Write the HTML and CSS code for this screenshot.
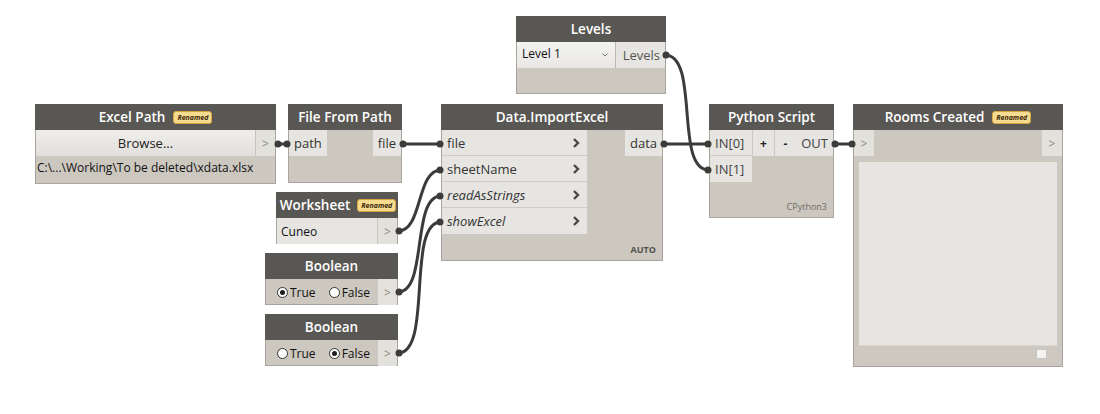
FILE: index.html
```html
<!DOCTYPE html>
<html lang="en">
<head>
    <meta charset="UTF-8">
    <title>Rooms from Excel</title>
    <link rel="stylesheet" href="styles.css">
</head>
<body>
    <div class="canvas">

        <!-- Levels selector -->
        <div class="node n-levels">
            <div class="hdr">Levels</div>
            <div class="row">
                <div class="dropdown"><span>Level 1</span><svg class="caret" width="6" height="4"><path d="M0.5 0.5 L3 3 L5.5 0.5"/></svg></div>
                <div class="port out">Levels</div>
            </div>
        </div>

        <!-- Excel Path -->
        <div class="node n-excel">
            <div class="hdr">Excel Path <span class="badge">Renamed</span></div>
            <div class="row">
                <div class="browse">Browse...</div>
                <div class="port arrow">&gt;</div>
            </div>
            <div class="path-text">C:\...\Working\To be deleted\xdata.xlsx</div>
        </div>

        <!-- File From Path -->
        <div class="node n-ffp">
            <div class="hdr">File From Path</div>
            <div class="cols">
                <div class="ins"><div class="port">path</div></div>
                <div class="fill"></div>
                <div class="outs"><div class="port out">file</div></div>
            </div>
        </div>

        <!-- Data.ImportExcel -->
        <div class="node n-import">
            <div class="hdr">Data.ImportExcel</div>
            <div class="cols">
                <div class="ins wide">
                    <div class="port lined">file <svg class="chev" width="7" height="10"><path d="M1 1 L5 5 L1 9"/></svg></div>
                    <div class="port lined">sheetName <svg class="chev" width="7" height="10"><path d="M1 1 L5 5 L1 9"/></svg></div>
                    <div class="port lined"><i>readAsStrings</i> <svg class="chev" width="7" height="10"><path d="M1 1 L5 5 L1 9"/></svg></div>
                    <div class="port"><i>showExcel</i> <svg class="chev" width="7" height="10"><path d="M1 1 L5 5 L1 9"/></svg></div>
                </div>
                <div class="fill"></div>
                <div class="outs"><div class="port out">data</div></div>
            </div>
            <div class="foot bold">AUTO</div>
        </div>

        <!-- Python Script -->
        <div class="node n-py">
            <div class="hdr">Python Script</div>
            <div class="cols">
                <div class="ins">
                    <div class="port lined">IN[0]</div>
                    <div class="port">IN[1]</div>
                </div>
                <div class="btn">+</div>
                <div class="btn">-</div>
                <div class="fill"></div>
                <div class="outs"><div class="port out">OUT</div></div>
            </div>
            <div class="foot">CPython3</div>
        </div>

        <!-- Watch node -->
        <div class="node n-rooms">
            <div class="hdr">Rooms Created <span class="badge">Renamed</span></div>
            <div class="row">
                <div class="port arrow left">&gt;</div>
                <div class="fill"></div>
                <div class="port arrow">&gt;</div>
            </div>
            <div class="watch">
                <div class="watch-area"></div>
                <div class="watch-bar"><span class="grip"></span></div>
            </div>
        </div>

        <!-- Worksheet string -->
        <div class="node n-ws">
            <div class="hdr">Worksheet <span class="badge">Renamed</span></div>
            <div class="row">
                <div class="text-in">Cuneo</div>
                <div class="port arrow">&gt;</div>
            </div>
        </div>

        <!-- Booleans -->
        <div class="node n-b1">
            <div class="hdr">Boolean</div>
            <div class="row">
                <div class="radios">
                    <label><span class="radio on"></span>True</label>
                    <label><span class="radio"></span>False</label>
                </div>
                <div class="port arrow">&gt;</div>
            </div>
        </div>

        <div class="node n-b2">
            <div class="hdr">Boolean</div>
            <div class="row">
                <div class="radios">
                    <label><span class="radio"></span>True</label>
                    <label><span class="radio on"></span>False</label>
                </div>
                <div class="port arrow">&gt;</div>
            </div>
        </div>

        <!-- connectors -->
        <svg class="wires" width="1100" height="414">
            <g class="wire">
                <path d="M278 144 H287"/>
                <path d="M402 144 H441"/>
                <path d="M398 231 C423 231, 416 170, 441 170"/>
                <path d="M398 292 C428 292, 411 196, 441 196"/>
                <path d="M398 353 C433 353, 406 222, 441 222"/>
                <path d="M663 144 H709"/>
                <path d="M665 55 C700 55, 674 170, 709 170"/>
                <path d="M834 144 H853"/>
            </g>
            <g class="dot">
                <circle cx="278" cy="144" r="3.5"/><circle cx="287" cy="144" r="3.5"/>
                <circle cx="403" cy="144" r="3.5"/><circle cx="440" cy="144" r="3.5"/>
                <circle cx="399" cy="231" r="3.5"/><circle cx="440" cy="170" r="3.5"/>
                <circle cx="399" cy="292" r="3.5"/><circle cx="440" cy="196" r="3.5"/>
                <circle cx="399" cy="353" r="3.5"/><circle cx="440" cy="222" r="3.5"/>
                <circle cx="664" cy="144" r="3.5"/><circle cx="708" cy="144" r="3.5"/>
                <circle cx="666" cy="55" r="3.5"/><circle cx="708" cy="170" r="3.5"/>
                <circle cx="835" cy="144" r="3.5"/><circle cx="852" cy="144" r="3.5"/>
            </g>
        </svg>
    </div>
</body>
</html>
```

FILE: styles.css
```css
body {
    margin: 0;
    background: #ffffff;
    font-family: "Open Sans", "Noto Sans", sans-serif;
}

.canvas {
    position: relative;
    width: 1100px;
    height: 414px;
    overflow: hidden;
    background: #ffffff;
}

/* ---- generic node ---- */
.node {
    position: absolute;
    box-sizing: border-box;
    background: #ccc8c0;
    border: 1px solid #a9a59e;
    display: flex;
    flex-direction: column;
}

.hdr {
    height: 26px;
    margin: -1px -1px 0;
    background: #595754;
    color: #ffffff;
    font-size: 13.5px;
    font-weight: 600;
    display: flex;
    align-items: center;
    justify-content: center;
    gap: 8px;
    flex-shrink: 0;
}

.badge {
    font-size: 7px;
    font-style: italic;
    font-weight: 700;
    color: #3b2b0c;
    background: #f7dc8f;
    border: 1px solid #d6a443;
    border-radius: 3px;
    padding: 0 3px;
    line-height: 11px;
}

.row {
    display: flex;
    height: 26px;
}

.cols {
    display: flex;
    align-items: flex-start;
}

.ins, .outs {
    display: flex;
    flex-direction: column;
}

.fill {
    flex: 1;
}

.port {
    height: 26px;
    box-sizing: border-box;
    background: #e6e5e1;
    color: #333333;
    font-size: 13px;
    display: flex;
    align-items: center;
    padding: 0 5px;
}

.port.out {
    justify-content: flex-end;
}

.port.lined {
    border-bottom: 1px solid #cfccc5;
}

.port.arrow {
    width: 19px;
    justify-content: center;
    padding: 0;
    color: #8a8782;
    font-size: 12px;
    background: #e2e1dc;
}

.ins.wide {
    width: 145px;
}

.ins.wide .port {
    justify-content: space-between;
}

.chev {
    margin-right: 2px;
}

.chev path {
    fill: none;
    stroke: #4a4845;
    stroke-width: 2.4;
}

.foot {
    margin-top: auto;
    padding: 0 6px 4px;
    text-align: right;
    font-size: 9px;
    color: #6f6c67;
}

.foot.bold {
    font-weight: 700;
    color: #55524e;
}

/* ---- placements on the canvas ---- */
.n-levels { left: 516px; top: 16px; width: 150px; height: 78px; }
.n-excel  { left: 35px;  top: 104px; width: 241px; height: 80px; }
.n-ffp    { left: 288px; top: 104px; width: 114px; height: 79px; }
.n-import { left: 441px; top: 104px; width: 222px; height: 157px; }
.n-py     { left: 709px; top: 104px; width: 125px; height: 114px; }
.n-rooms  { left: 853px; top: 104px; width: 210px; height: 263px; }
.n-ws     { left: 276px; top: 192px; width: 122px; height: 52px; }
.n-b1     { left: 265px; top: 253px; width: 133px; height: 52px; }
.n-b2     { left: 265px; top: 314px; width: 133px; height: 52px; }

.n-ws .hdr {
    gap: 7px;
    padding-left: 2px;
}

/* ---- Levels dropdown ---- */
.dropdown {
    width: 99px;
    box-sizing: border-box;
    background: linear-gradient(#f4f4f3, #e8e7e4);
    border-right: 1px solid #bcb9b3;
    font-size: 12px;
    color: #111111;
    display: flex;
    justify-content: space-between;
    align-items: flex-start;
    padding: 3px 7px 0 5px;
}

.caret {
    margin-top: 8px;
}

.caret path {
    fill: none;
    stroke: #777;
    stroke-width: 1;
}

.n-levels .port.out {
    flex: 1;
    color: #555;
}

/* ---- Excel path ---- */
.browse {
    flex: 1;
    background: linear-gradient(#efeeeb, #e1dfdb);
    border-right: 1px solid #c6c3bc;
    font-size: 13px;
    color: #222;
    display: flex;
    align-items: center;
    justify-content: center;
}

.path-text {
    font-size: 12px;
    color: #111111;
    padding: 3px 1px;
}

/* ---- Python script ---- */
.n-py .ins {
    width: 42px;
}

.n-py .port {
    color: #444;
}

.btn {
    width: 21px;
    height: 26px;
    margin-left: 1px;
    background: #e6e5e1;
    font-size: 12px;
    font-weight: 700;
    display: flex;
    align-items: center;
    justify-content: center;
    color: #222;
}

/* ---- watch ---- */
.n-rooms .port.arrow {
    width: 20px;
}

.watch {
    flex: 1;
    margin: 6px 5px 5px;
    display: flex;
    flex-direction: column;
}

.watch-area {
    flex: 1;
    background: #e6e5e1;
}

.watch-bar {
    height: 15px;
    background: #cdc9c1;
    border-top: 1px solid #d8d5cf;
    display: flex;
    justify-content: flex-end;
    align-items: center;
    padding-right: 10px;
}

.grip {
    width: 9px;
    height: 8px;
    background: #f3f3f2;
    border: 1px solid #c9c6c0;
}

/* ---- string input ---- */
.text-in {
    flex: 1;
    background: #e6e5e1;
    border-right: 1px solid #c6c3bc;
    font-size: 12px;
    color: #111;
    display: flex;
    align-items: center;
    padding-left: 4px;
}

/* ---- boolean radios ---- */
.radios {
    flex: 1;
    display: flex;
    align-items: center;
    gap: 13px;
    padding-left: 11px;
    font-size: 12px;
    color: #111;
}

.radios label {
    display: flex;
    align-items: center;
}

.radio {
    width: 9px;
    height: 9px;
    border: 1px solid #333;
    border-radius: 50%;
    background: #fff;
    margin-right: 2px;
    display: flex;
    align-items: center;
    justify-content: center;
}

.radio.on::after {
    content: "";
    width: 5px;
    height: 5px;
    border-radius: 50%;
    background: #1c1c1c;
}

/* ---- connectors ---- */
.wires {
    position: absolute;
    left: 0;
    top: 0;
    pointer-events: none;
}

.wire path {
    fill: none;
    stroke: #3c3b39;
    stroke-width: 3;
}

.dot circle {
    fill: #3c3b39;
}
```
